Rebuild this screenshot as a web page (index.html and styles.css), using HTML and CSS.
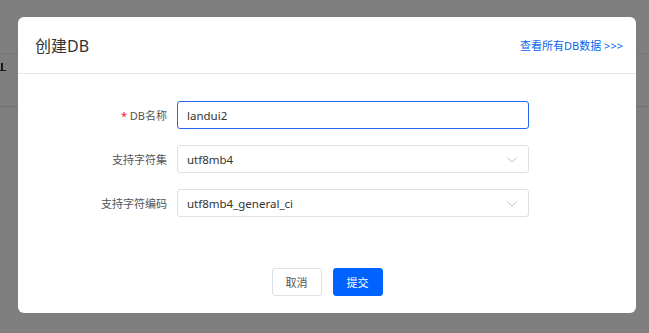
FILE: index.html
```html
<!DOCTYPE html>
<html lang="zh">
<head>
<meta charset="utf-8">
<link rel="stylesheet" href="styles.css">
</head>
<body>
<div class="page">
  <div class="page-top"></div>
  <div class="page-bar">
    <svg class="bar-icon" width="8" height="14" viewBox="0 0 8 14"><rect x="0" y="2" width="2" height="10" fill="#333"/><rect x="3" y="5" width="2" height="7" fill="#333"/><rect x="0" y="12" width="8" height="1" fill="#333"/></svg>
  </div>
</div>
<div class="overlay"></div>
<div class="modal">
  <div class="modal-header">
    <div class="modal-title">创建DB</div>
    <a class="modal-link">查看所有DB数据 &gt;&gt;&gt;</a>
  </div>
  <div class="modal-body">
    <div class="form-row">
      <label class="form-label"><span class="req">*</span> DB名称</label>
      <div class="input focused">landui2</div>
    </div>
    <div class="form-row">
      <label class="form-label">支持字符集</label>
      <div class="input select">utf8mb4
        <svg class="arrow" width="12" height="8" viewBox="0 0 12 8"><path d="M1 1.5 L6 6 L11 1.5" fill="none" stroke="#c0c4cc" stroke-width="1"/></svg>
      </div>
    </div>
    <div class="form-row">
      <label class="form-label">支持字符编码</label>
      <div class="input select">utf8mb4_general_ci
        <svg class="arrow" width="12" height="8" viewBox="0 0 12 8"><path d="M1 1.5 L6 6 L11 1.5" fill="none" stroke="#c0c4cc" stroke-width="1"/></svg>
      </div>
    </div>
  </div>
  <div class="modal-footer">
    <button class="btn btn-default">取消</button>
    <button class="btn btn-primary">提交</button>
  </div>
</div>
</body>
</html>
```
FILE: styles.css
```css
* { box-sizing: border-box; }
html, body { margin: 0; padding: 0; }
body {
  width: 649px;
  height: 333px;
  overflow: hidden;
  font-family: "Noto Sans", "Noto Sans CJK SC", sans-serif;
  background: #fff;
  position: relative;
}
.page { height: 333px; }
.page-top { height: 54px; border-bottom: 1px solid #eee; }
.page-bar {
  height: 53px;
  border-bottom: 1px solid #e4e4e4;
  display: flex;
  align-items: flex-start;
  padding-top: 4px;
}
.bar-icon { margin-left: -2px; }
.overlay {
  position: absolute;
  inset: 0;
  background: rgba(0,0,0,0.5);
}
.modal {
  position: absolute;
  left: 18px;
  top: 17px;
  width: 618px;
  height: 296px;
  background: #fff;
  border-radius: 6px;
  display: flex;
  flex-direction: column;
}
.modal-header {
  height: 57px;
  border-bottom: 1px solid #e6e6e6;
  display: flex;
  align-items: center;
  justify-content: space-between;
  padding: 0 13px 0 17px;
}
.modal-title {
  font-size: 16px;
  color: #333;
}
.modal-link {
  font-size: 11px;
  color: #0a63f0;
  cursor: pointer;
}
.modal-body {
  padding-top: 27px;
  display: flex;
  flex-direction: column;
  gap: 16px;
}
.form-row {
  display: flex;
  align-items: center;
  gap: 10px;
}
.form-label {
  width: 149px;
  text-align: right;
  font-size: 11px;
  color: #555;
}
.req { color: #f5222d; }
.input {
  width: 352px;
  height: 28px;
  border: 1px solid #dcdfe6;
  border-radius: 3px;
  font-size: 11.5px;
  color: #333;
  padding: 0 9px;
  display: flex;
  align-items: center;
  position: relative;
}
.input.focused { border-color: #2468f2; }
.arrow { position: absolute; right: 10px; top: 10px; }
.modal-footer {
  margin-top: auto;
  padding-bottom: 17px;
  display: flex;
  justify-content: center;
  gap: 11px;
}
.btn {
  height: 28px;
  width: 50px;
  border-radius: 3px;
  font-size: 11px;
  font-family: inherit;
  padding: 0;
  cursor: pointer;
}
.btn-default { background: #fff; border: 1px solid #dcdfe6; color: #555; }
.btn-primary { background: #0062ff; border: 1px solid #0062ff; color: #fff; }
```
